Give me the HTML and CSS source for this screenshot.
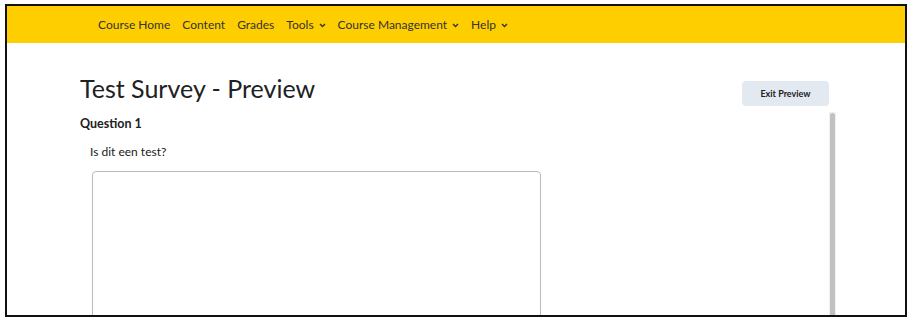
FILE: index.html
```html
<!DOCTYPE html>
<html lang="en">
<head>
<meta charset="UTF-8">
<title>Test Survey - Preview</title>
<link rel="stylesheet" href="styles.css">
</head>
<body>

<div class="frame">
    <nav class="navbar">
        <a href="#">Course Home</a>
        <a href="#">Content</a>
        <a href="#">Grades</a>
        <a href="#">Tools <span class="chev"><svg width="7" height="5" viewBox="0 0 7 5"><path d="M1 1l2.5 2.5L6 1" fill="none" stroke="#333" stroke-width="1.4"/></svg></span></a>
        <a href="#">Course Management <span class="chev"><svg width="7" height="5" viewBox="0 0 7 5"><path d="M1 1l2.5 2.5L6 1" fill="none" stroke="#333" stroke-width="1.4"/></svg></span></a>
        <a href="#">Help <span class="chev"><svg width="7" height="5" viewBox="0 0 7 5"><path d="M1 1l2.5 2.5L6 1" fill="none" stroke="#333" stroke-width="1.4"/></svg></span></a>
    </nav>

    <div class="page">
        <div class="main">
            <h1>Test Survey - Preview</h1>
            <h2>Question 1</h2>
            <p class="question">Is dit een test?</p>
            <div class="answer"></div>
        </div>
        <div class="side">
            <button class="exit" type="button">Exit Preview</button>
            <div class="scroll"><div class="thumb"></div></div>
        </div>
    </div>
</div>

</body>
</html>
```

FILE: styles.css
```css
html, body {
    margin: 0;
    padding: 0;
    background: #fff;
}
body {
    font-family: Lato, "Noto Sans", sans-serif;
    color: #202122;
    padding: 4px 0 0 5px;
}
.frame {
    width: 898px;
    height: 309px;
    border: 2px solid #111;
    overflow: hidden;
    display: flex;
    flex-direction: column;
}
.navbar {
    background: #ffce00;
    height: 37px;
    flex: none;
    display: flex;
    align-items: center;
    gap: 12px;
    padding-left: 91px;
    font-size: 12px;
}
.navbar a {
    color: #333;
    text-decoration: none;
    display: flex;
    align-items: center;
    gap: 5px;
}
.chev {
    display: flex;
    padding-top: 1px;
}
.page {
    flex: 1;
    display: flex;
    min-height: 0;
}
.main {
    flex: none;
    width: 535px;
    padding-left: 73px;
}
h1 {
    margin: 29px 0 0;
    font-size: 25px;
    font-weight: 400;
    line-height: 32px;
}
h2 {
    margin: 12px 0 0;
    font-size: 12.5px;
    font-weight: 700;
    line-height: 16px;
}
.question {
    margin: 12px 0 0 10px;
    font-size: 12px;
    line-height: 16px;
}
.answer {
    margin: 11px 0 0 12px;
    width: 447px;
    height: 200px;
    border: 1px solid #b8bcbf;
    border-radius: 4px;
}
.side {
    flex: none;
    width: 96px;
    margin-left: 127px;
    display: flex;
    flex-direction: column;
}
.exit {
    margin-top: 38px;
    width: 87px;
    height: 25px;
    border: none;
    border-radius: 4px;
    background: #e3e9f1;
    font-family: Lato, "Noto Sans", sans-serif;
    font-size: 9px;
    font-weight: 700;
    color: #202122;
    padding: 0;
}
.scroll {
    margin: 6px 0 0 87px;
    width: 7px;
    flex: 1;
    background: #f1f1f1;
    display: flex;
    justify-content: center;
}
.thumb {
    width: 5px;
    margin-top: 1px;
    background: #c1c1c1;
    border-radius: 3px 3px 0 0;
}
```
